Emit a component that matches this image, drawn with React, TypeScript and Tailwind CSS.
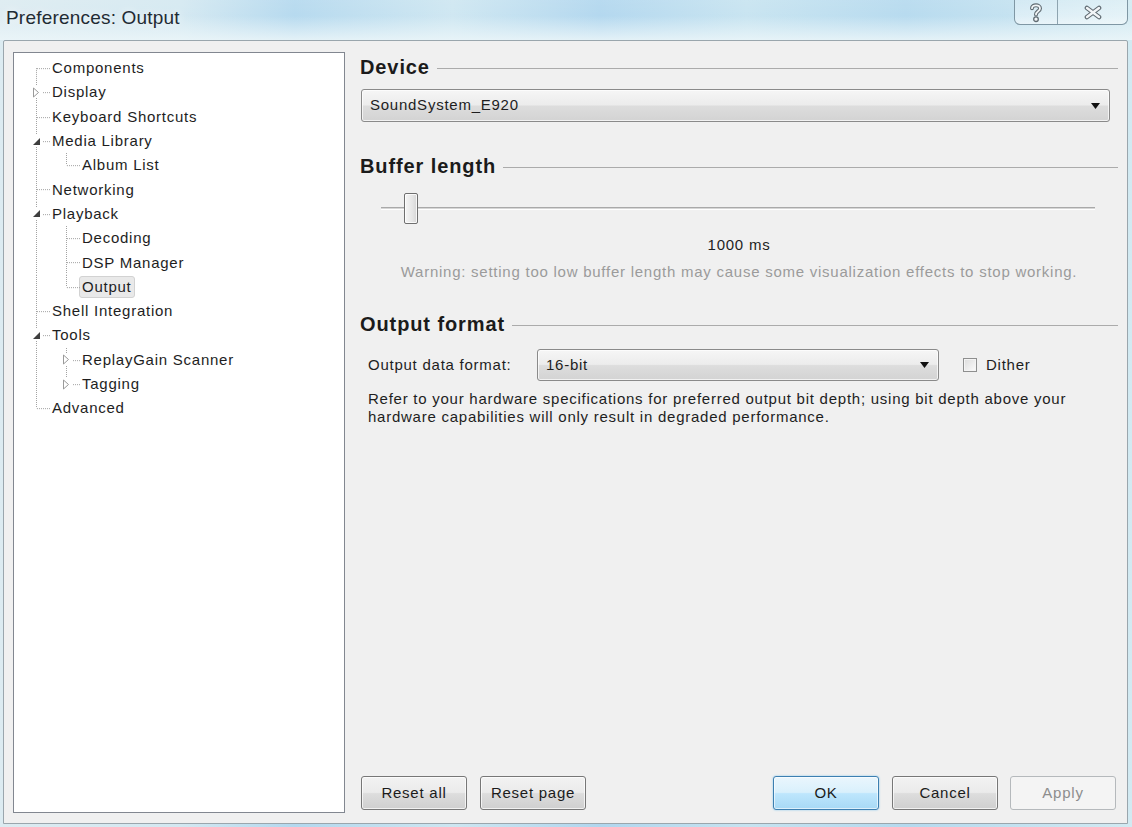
import React from 'react';

type Node = {
  label: string;
  level: 0 | 1;
  exp?: 'open' | 'closed';
  last?: boolean;
  first?: boolean;
  selected?: boolean;
};

const TREE: Node[] = [
  { label: 'Components', level: 0, first: true },
  { label: 'Display', level: 0, exp: 'closed' },
  { label: 'Keyboard Shortcuts', level: 0 },
  { label: 'Media Library', level: 0, exp: 'open' },
  { label: 'Album List', level: 1, last: true },
  { label: 'Networking', level: 0 },
  { label: 'Playback', level: 0, exp: 'open' },
  { label: 'Decoding', level: 1 },
  { label: 'DSP Manager', level: 1 },
  { label: 'Output', level: 1, last: true, selected: true },
  { label: 'Shell Integration', level: 0 },
  { label: 'Tools', level: 0, exp: 'open' },
  { label: 'ReplayGain Scanner', level: 1, exp: 'closed' },
  { label: 'Tagging', level: 1, exp: 'closed', last: true },
  { label: 'Advanced', level: 0, last: true },
];

const DOT = '#a3a3a3';

// vertical guide for an ancestor level that keeps going
const Guide: React.FC = () => (
  <svg width="30" height="100%" className="shrink-0 h-full">
    <line x1="14.5" y1="0" x2="14.5" y2="100%" stroke={DOT} strokeDasharray="1 1" />
  </svg>
);

const Connector: React.FC<{ node: Node }> = ({ node }) => (
  <div className="relative shrink-0 w-[28px] h-full">
    <svg width="28" height="100%" className="h-full">
      <line x1="14.5" y1={node.first ? '50%' : '0'} x2="14.5" y2={node.last ? '50%' : '100%'} stroke={DOT} strokeDasharray="1 1" />
      <line x1="15" y1="50%" x2="28" y2="50%" stroke={DOT} strokeDasharray="1 1" transform="translate(0,0.5)" />
    </svg>
    {node.exp && (
      <span className="absolute left-[8px] top-1/2 -translate-y-1/2 w-[12px] h-[12px] bg-white flex items-center justify-center">
        {node.exp === 'closed' ? (
          <svg width="8" height="11" viewBox="0 0 8 11">
            <path d="M1.5 1 L6.5 5.5 L1.5 10 Z" fill="white" stroke="#9a9a9a" strokeWidth="1" />
          </svg>
        ) : (
          <svg width="9" height="9" viewBox="0 0 9 9">
            <path d="M8 1 L8 8 L1 8 Z" fill="#3f3f3f" />
          </svg>
        )}
      </span>
    )}
  </div>
);

const Tree: React.FC = () => (
  <div className="w-[332px] shrink-0 bg-white border border-[#828790] pt-[3px] pl-[8px]">
    {TREE.map((n, i) => (
      <div key={i} className="flex items-stretch h-[24.3px]">
        {n.level === 1 && <Guide />}
        <Connector node={n} />
        <div className="flex items-center">
          <span
            className={
              n.selected
                ? 'px-[2px] leading-[20px] rounded-[3px] bg-[#e9e9e9] border border-[#d2d2d2] -ml-px'
                : 'px-[2px] leading-[20px]'
            }
          >
            {n.label}
          </span>
        </div>
      </div>
    ))}
  </div>
);

const Heading: React.FC<{ children: React.ReactNode; className?: string }> = ({ children, className }) => (
  <div className={`flex items-center gap-[7px] h-[24px] ${className ?? ''}`}>
    <span className="text-[20px] font-bold leading-[24px] text-[#1b1b1b] tracking-[0.9px]">{children}</span>
    <div className="flex-1 h-px bg-[#ababab] mt-[2px]" />
  </div>
);

const Arrow: React.FC = () => (
  <svg width="9" height="6" viewBox="0 0 9 6">
    <path d="M0 0 H9 L4.5 6 Z" fill="#111" />
  </svg>
);

const Combo: React.FC<{ value: string; className?: string }> = ({ value, className }) => (
  <div
    className={`flex items-center justify-between px-[8px] pr-[9px] border border-[#8a8a8a] rounded-[3px] bg-[linear-gradient(180deg,#f6f6f6_0%,#ececec_48%,#dddddd_52%,#d3d3d3_100%)] shadow-[inset_0_0_0_1px_rgba(255,255,255,0.7)] ${className ?? ''}`}
  >
    <span>{value}</span>
    <Arrow />
  </div>
);

const Btn: React.FC<{ label: string; kind?: 'default' | 'disabled'; className?: string }> = ({ label, kind, className }) => {
  const base = 'h-[34px] w-[106px] flex items-center justify-center rounded-[3px] border';
  const style =
    kind === 'default'
      ? 'border-[#3c7fb1] bg-[linear-gradient(180deg,#eaf6fd_0%,#d9f0fc_48%,#bee6fd_52%,#a7d9f5_100%)] shadow-[inset_0_0_0_1px_rgba(255,255,255,0.6),0_0_2px_#7ac1ec] text-[#1b1b1b]'
      : kind === 'disabled'
      ? 'border-[#b5b9bc] bg-[#f4f4f4] text-[#8d8d8d]'
      : 'border-[#777] bg-[linear-gradient(180deg,#f2f2f2_0%,#ebebeb_48%,#dddddd_52%,#cfcfcf_100%)] shadow-[inset_0_0_0_1px_rgba(255,255,255,0.7)] text-[#1b1b1b]';
  return <div className={`${base} ${style} ${className ?? ''}`}>{label}</div>;
};

const HelpIcon: React.FC = () => (
  <svg width="16" height="21" viewBox="0 0 16 21">
    <path d="M4 6.2 C4 2.4 12 2.2 12 6.4 C12 9.2 8 9.2 8 12.6" fill="none" stroke="#5f6a71" strokeWidth="4" strokeLinecap="round" />
    <path d="M4 6.2 C4 2.4 12 2.2 12 6.4 C12 9.2 8 9.2 8 12.6" fill="none" stroke="#f2f5f7" strokeWidth="1.8" strokeLinecap="round" />
    <circle cx="8" cy="17.2" r="2.3" fill="#f2f5f7" stroke="#5f6a71" strokeWidth="1.3" />
  </svg>
);

const CloseIcon: React.FC = () => (
  <svg width="20" height="15" viewBox="0 0 20 15">
    <path d="M4 3 L16 12 M16 3 L4 12" stroke="#5f6a71" strokeWidth="4.6" strokeLinecap="round" />
    <path d="M4 3 L16 12 M16 3 L4 12" stroke="#f2f5f7" strokeWidth="2.4" strokeLinecap="round" />
  </svg>
);

export default function App() {
  return (
    <div className="w-[1132px] h-[827px] flex flex-col overflow-hidden font-['Liberation_Sans',Arial,sans-serif] text-[15px] tracking-[0.75px] text-[#1e1e1e] bg-[linear-gradient(90deg,#dcebf1_0%,#d3e8f1_16%,#b3d8ee_26%,#cde6f1_40%,#b0d6ee_53%,#c6e3f0_66%,#b4d9ee_80%,#d2eaf2_100%)]">
      {/* title bar */}
      <div className="h-[40px] shrink-0 flex items-start justify-between bg-[linear-gradient(180deg,rgba(255,255,255,0.1)_0%,rgba(255,255,255,0.05)_40%,rgba(236,246,249,0.85)_100%)]">
        <div className="pl-[6px] pt-[6px] text-[19px] tracking-[0.2px] leading-[24px] text-[#1f2b33] [text-shadow:0_0_8px_rgba(255,255,255,0.9)]">
          Preferences: Output
        </div>
        <div className="mr-[4px] flex h-[25px] w-[114px] border border-t-0 border-[#7f97a4] rounded-b-[6px] bg-[linear-gradient(180deg,rgba(255,255,255,0.2),rgba(255,255,255,0.5))]">
          <div className="w-[43px] flex items-center justify-center border-r border-[#8ea4b0]">
            <HelpIcon />
          </div>
          <div className="flex-1 flex items-center justify-center">
            <CloseIcon />
          </div>
        </div>
      </div>

      {/* client area */}
      <div className="flex-1 ml-[3px] mr-[4px] mb-[3px] bg-[#f0f0f0] border border-[#9aa6ad] rounded-t-[2px] flex pl-[9px] pt-[11px] pb-[10px]">
        <Tree />

        <div className="flex-1 flex flex-col pl-[15px] pr-[9px] pt-[3px] pb-[3px]">
          <Heading>Device</Heading>
          <Combo value="SoundSystem_E920" className="mt-[10px] h-[33px] ml-px mr-[8px]" />

          <Heading className="mt-[32px]">Buffer length</Heading>
          <div className="relative mt-[15px] h-[31px] ml-[21px] mr-[23px] flex items-center">
            <div className="w-full h-[3px] border-t border-[#a9a9a9] border-b border-b-white bg-[#d6d6d6]" />
            <div className="absolute left-[23px] top-0 w-[14px] h-[31px] rounded-[2px] border border-[#6f6f6f] bg-[linear-gradient(90deg,#f6f6f6_0%,#e6e6e6_60%,#d6d6d6_100%)] shadow-[inset_0_0_0_1px_rgba(255,255,255,0.8)]" />
          </div>
          <div className="mt-[12px] leading-[18px] text-center">1000 ms</div>
          <div className="mt-[9px] leading-[18px] text-center text-[#9b9b9b]">
            Warning: setting too low buffer length may cause some visualization effects to stop working.
          </div>

          <Heading className="mt-[31px]">Output format</Heading>
          <div className="mt-[13px] flex items-center pl-[8px]">
            <span className="w-[169px]">Output data format:</span>
            <Combo value="16-bit" className="w-[402px] h-[32px]" />
            <span className="ml-[24px] w-[14px] h-[14px] border border-[#8e8f8f] bg-[linear-gradient(135deg,#dcdcdc,#fbfbfb)] shadow-[inset_0_0_0_1px_#f4f4f4]" />
            <span className="ml-[9px]">Dither</span>
          </div>
          <p className="mt-[9px] pl-[8px] leading-[18px]">
            Refer to your hardware specifications for preferred output bit depth; using bit depth above your
            <br />
            hardware capabilities will only result in degraded performance.
          </p>

          <div className="mt-auto flex items-center pl-px pr-[2px]">
            <Btn label="Reset all" />
            <Btn label="Reset page" className="ml-[13px] w-[105px]" />
            <div className="flex-1" />
            <Btn label="OK" kind="default" />
            <Btn label="Cancel" className="ml-[13px]" />
            <Btn label="Apply" kind="disabled" className="ml-[12px]" />
          </div>
        </div>
      </div>
    </div>
  );
}
